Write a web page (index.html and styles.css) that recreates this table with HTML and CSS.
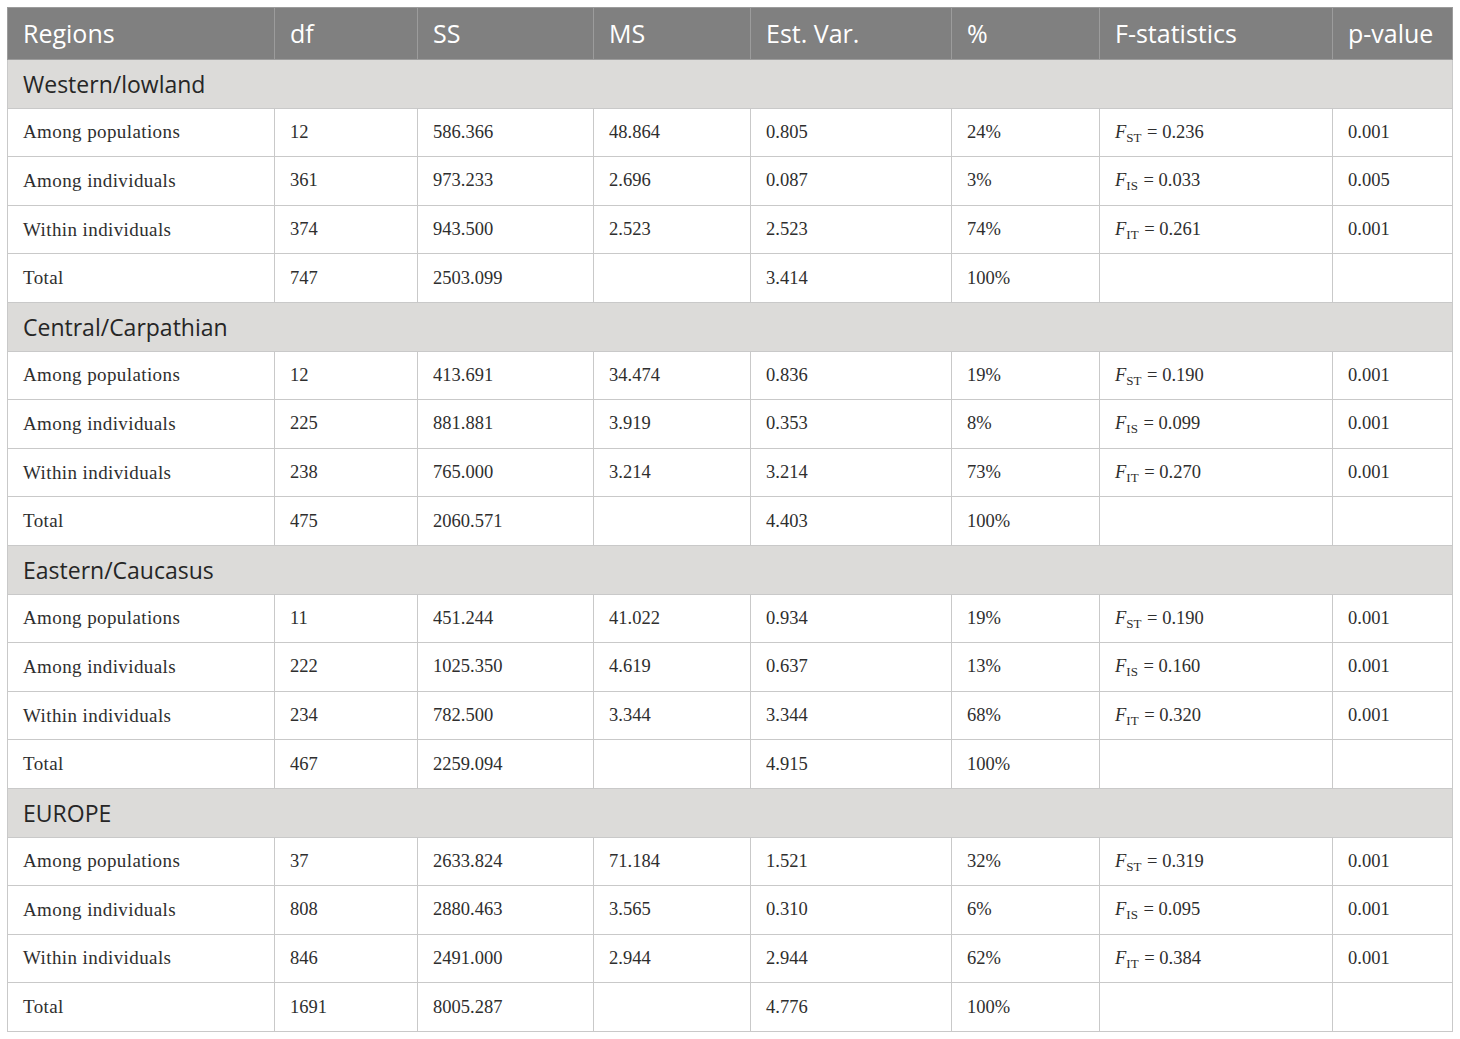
FILE: index.html
```html
<!DOCTYPE html>
<html lang="en">
<head>
    <meta charset="UTF-8">
    <title>AMOVA by region</title>
    <link rel="stylesheet" href="styles.css">
</head>
<body>
    <table class="amova">
        <colgroup>
            <col class="c-region">
            <col class="c-df">
            <col class="c-ss">
            <col class="c-ms">
            <col class="c-var">
            <col class="c-pct">
            <col class="c-f">
            <col class="c-p">
        </colgroup>
        <thead>
            <tr>
                <th>Regions</th>
                <th>df</th>
                <th>SS</th>
                <th>MS</th>
                <th>Est. Var.</th>
                <th>%</th>
                <th>F-statistics</th>
                <th>p-value</th>
            </tr>
        </thead>
        <tbody>
            <tr class="group"><td colspan="8">Western/lowland</td></tr>
            <tr><td>Among populations</td><td>12</td><td>586.366</td><td>48.864</td><td>0.805</td><td>24%</td><td><i>F</i><sub>ST</sub> = 0.236</td><td>0.001</td></tr>
            <tr><td>Among individuals</td><td>361</td><td>973.233</td><td>2.696</td><td>0.087</td><td>3%</td><td><i>F</i><sub>IS</sub> = 0.033</td><td>0.005</td></tr>
            <tr><td>Within individuals</td><td>374</td><td>943.500</td><td>2.523</td><td>2.523</td><td>74%</td><td><i>F</i><sub>IT</sub> = 0.261</td><td>0.001</td></tr>
            <tr><td>Total</td><td>747</td><td>2503.099</td><td></td><td>3.414</td><td>100%</td><td></td><td></td></tr>

            <tr class="group"><td colspan="8">Central/Carpathian</td></tr>
            <tr><td>Among populations</td><td>12</td><td>413.691</td><td>34.474</td><td>0.836</td><td>19%</td><td><i>F</i><sub>ST</sub> = 0.190</td><td>0.001</td></tr>
            <tr><td>Among individuals</td><td>225</td><td>881.881</td><td>3.919</td><td>0.353</td><td>8%</td><td><i>F</i><sub>IS</sub> = 0.099</td><td>0.001</td></tr>
            <tr><td>Within individuals</td><td>238</td><td>765.000</td><td>3.214</td><td>3.214</td><td>73%</td><td><i>F</i><sub>IT</sub> = 0.270</td><td>0.001</td></tr>
            <tr><td>Total</td><td>475</td><td>2060.571</td><td></td><td>4.403</td><td>100%</td><td></td><td></td></tr>

            <tr class="group"><td colspan="8">Eastern/Caucasus</td></tr>
            <tr><td>Among populations</td><td>11</td><td>451.244</td><td>41.022</td><td>0.934</td><td>19%</td><td><i>F</i><sub>ST</sub> = 0.190</td><td>0.001</td></tr>
            <tr><td>Among individuals</td><td>222</td><td>1025.350</td><td>4.619</td><td>0.637</td><td>13%</td><td><i>F</i><sub>IS</sub> = 0.160</td><td>0.001</td></tr>
            <tr><td>Within individuals</td><td>234</td><td>782.500</td><td>3.344</td><td>3.344</td><td>68%</td><td><i>F</i><sub>IT</sub> = 0.320</td><td>0.001</td></tr>
            <tr><td>Total</td><td>467</td><td>2259.094</td><td></td><td>4.915</td><td>100%</td><td></td><td></td></tr>

            <tr class="group"><td colspan="8">EUROPE</td></tr>
            <tr><td>Among populations</td><td>37</td><td>2633.824</td><td>71.184</td><td>1.521</td><td>32%</td><td><i>F</i><sub>ST</sub> = 0.319</td><td>0.001</td></tr>
            <tr><td>Among individuals</td><td>808</td><td>2880.463</td><td>3.565</td><td>0.310</td><td>6%</td><td><i>F</i><sub>IS</sub> = 0.095</td><td>0.001</td></tr>
            <tr><td>Within individuals</td><td>846</td><td>2491.000</td><td>2.944</td><td>2.944</td><td>62%</td><td><i>F</i><sub>IT</sub> = 0.384</td><td>0.001</td></tr>
            <tr><td>Total</td><td>1691</td><td>8005.287</td><td></td><td>4.776</td><td>100%</td><td></td><td></td></tr>
        </tbody>
    </table>
</body>
</html>
```

FILE: styles.css
```css
* {
    box-sizing: border-box;
}

body {
    margin: 7px;
    background-color: #ffffff;
    font-family: "Liberation Serif", "Times New Roman", serif;
    color: #2e2e2e;
}

/* Table layout */
.amova {
    width: 1445px;
    border-collapse: collapse;
    table-layout: fixed;
}

.c-region { width: 267px; }
.c-df { width: 143px; }
.c-ss { width: 176px; }
.c-ms { width: 157px; }
.c-var { width: 201px; }
.c-pct { width: 148px; }
.c-f { width: 233px; }
.c-p { width: 120px; }

th, td {
    padding: 0 15px;
    text-align: left;
    vertical-align: middle;
    border: 1px solid #c9c9c9;
    white-space: nowrap;
}

/* Header */
th {
    height: 52px;
    background-color: #808080;
    border-color: #9c9c9c;
    color: #ffffff;
    font-family: "Open Sans", "Noto Sans", sans-serif;
    font-weight: 400;
    font-size: 25px;
    padding-bottom: 2px;
}

/* Body rows */
td {
    height: 48.6px;
    font-size: 18.5px;
}

td:first-child {
    font-size: 19px;
    letter-spacing: 0.4px;
}

.group td {
    background-color: #dcdbd9;
    font-family: "Open Sans", "Noto Sans", sans-serif;
    font-size: 23px;
    letter-spacing: 0;
    color: #262626;
}

sub {
    font-size: 13px;
    vertical-align: -4px;
    line-height: 0;
    margin-right: 1px;
}
```
